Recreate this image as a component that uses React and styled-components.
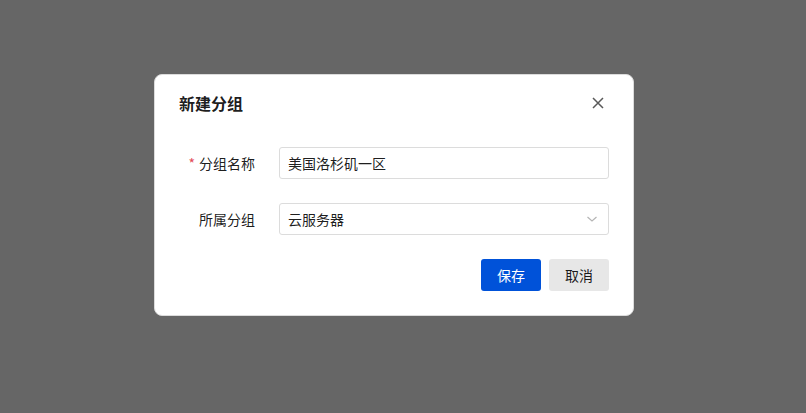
import React from 'react';
import styled, { createGlobalStyle } from 'styled-components';

const GlobalStyle = createGlobalStyle`
  html, body {
    margin: 0;
    padding: 0;
  }
  body {
    font-family: "Noto Sans CJK SC", "Noto Sans", sans-serif;
    font-size: 14px;
    color: rgba(0, 0, 0, 0.9);
  }
`;

const Overlay = styled.div`
  width: 806px;
  height: 413px;
  background: #666666;
  display: flex;
  justify-content: flex-start;
  padding: 74px 0 0 154px;
  box-sizing: border-box;
`;

const Dialog = styled.div`
  width: 480px;
  height: 242px;
  box-sizing: border-box;
  background: #ffffff;
  border: 1px solid #dcdcdc;
  border-radius: 8px;
  padding: 16px 24px 24px;
  display: flex;
  flex-direction: column;
`;

const Header = styled.div`
  display: flex;
  align-items: center;
  justify-content: space-between;
  height: 24px;
`;

const Title = styled.div`
  font-size: 16px;
  font-weight: 700;
  line-height: 24px;
  color: rgba(0, 0, 0, 0.9);
`;

const CloseButton = styled.button`
  border: none;
  background: none;
  padding: 0;
  width: 24px;
  height: 24px;
  margin-right: -1px;
  display: flex;
  align-items: center;
  justify-content: center;
  color: rgba(0, 0, 0, 0.65);
  cursor: pointer;
`;

const Form = styled.div`
  margin-top: 32px;
  display: flex;
  flex-direction: column;
  gap: 24px;
`;

const Row = styled.div`
  display: flex;
  align-items: center;
`;

const Label = styled.label`
  width: 100px;
  padding-right: 24px;
  box-sizing: border-box;
  text-align: right;
  line-height: 22px;
  color: rgba(0, 0, 0, 0.9);
`;

const Required = styled.span`
  color: #e34d59;
  margin-right: 4px;
`;

const Field = styled.div`
  flex: 1;
  height: 32px;
  box-sizing: border-box;
  border: 1px solid #dcdcdc;
  border-radius: 3px;
  padding: 0 8px;
  display: flex;
  align-items: center;
  justify-content: space-between;
  line-height: 22px;
  color: rgba(0, 0, 0, 0.9);
`;

const Chevron = styled.span`
  display: flex;
  color: #b5b5b5;
  margin-right: 1px;
`;

const Footer = styled.div`
  margin-top: 24px;
  display: flex;
  justify-content: flex-end;
  gap: 8px;
`;

const Button = styled.button`
  width: 60px;
  height: 32px;
  border: none;
  border-radius: 3px;
  font-family: inherit;
  font-size: 14px;
  cursor: pointer;
  background: ${p => (p.$primary ? '#0052d9' : '#e7e7e7')};
  color: ${p => (p.$primary ? '#ffffff' : 'rgba(0, 0, 0, 0.9)')};
`;

export default function App() {
  return (
    <>
      <GlobalStyle />
      <Overlay>
        <Dialog>
          <Header>
            <Title>新建分组</Title>
            <CloseButton aria-label="关闭">
              <svg width="14" height="14" viewBox="0 0 14 14" fill="none">
                <path d="M2 2 L12 12 M12 2 L2 12" stroke="currentColor" strokeWidth="1.5" />
              </svg>
            </CloseButton>
          </Header>
          <Form>
            <Row>
              <Label><Required>*</Required>分组名称</Label>
              <Field>美国洛杉矶一区</Field>
            </Row>
            <Row>
              <Label>所属分组</Label>
              <Field>
                云服务器
                <Chevron>
                  <svg width="14" height="14" viewBox="0 0 14 14" fill="none">
                    <path d="M2.5 5 L7 9 L11.5 5" stroke="currentColor" strokeWidth="1.2" />
                  </svg>
                </Chevron>
              </Field>
            </Row>
          </Form>
          <Footer>
            <Button $primary>保存</Button>
            <Button>取消</Button>
          </Footer>
        </Dialog>
      </Overlay>
    </>
  );
}
